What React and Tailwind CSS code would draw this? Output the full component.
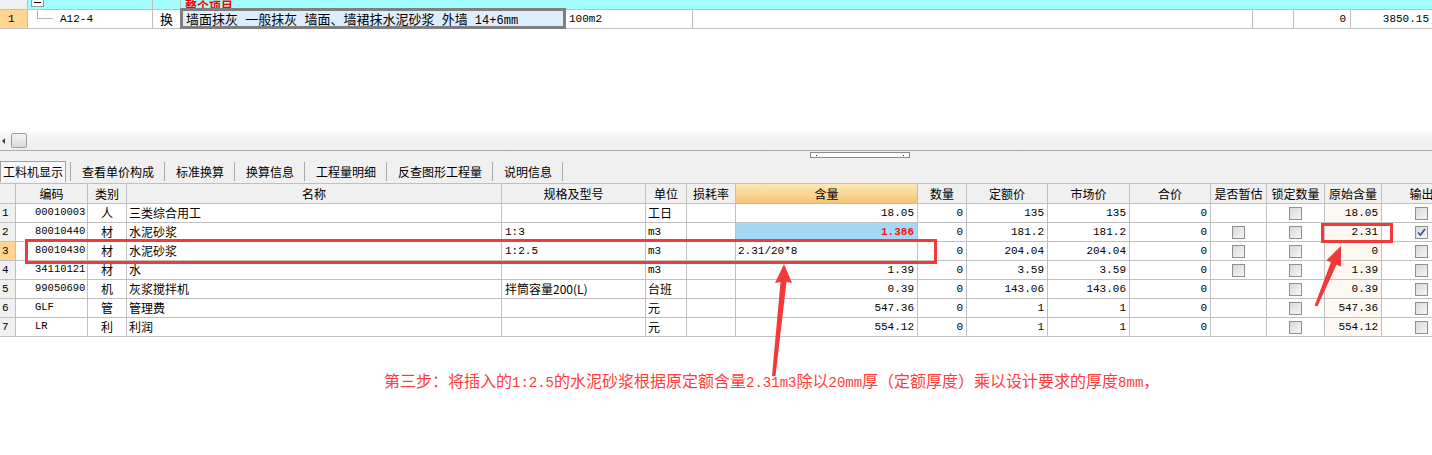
import React from "react";

const mono = "font-['Liberation_Mono','Noto_Sans_CJK_SC',monospace] text-[11px]";
const codeFont = "font-['Liberation_Mono',monospace] text-[10.5px]";
const cjk = "font-['Noto_Sans_CJK_SC',sans-serif] text-[12px]";
const latin = "font-['Liberation_Mono',monospace] text-[14px]";
const line = "border-[#c0c0c0]";

const Checkbox = ({ checked }) => (
  <span className="w-[13px] h-[13px] border border-[#8e8f8f] bg-gradient-to-br from-[#d8d8d8] to-[#f7f7f7] flex items-center justify-center">
    {checked && (
      <svg width="9" height="9" viewBox="0 0 9 9">
        <path d="M1 4.5 L3.5 7 L8 1" fill="none" stroke="#2b4aa8" strokeWidth="1.6" />
      </svg>
    )}
  </span>
);

const rows = [
  { no: "1", code: "00010003", type: "人", name: "三类综合用工", spec: "", unit: "工日", qty: "18.05", price: "135", market: "135", est: false, orig: "18.05", out: false },
  { no: "2", code: "80010440", type: "材", name: "水泥砂浆", spec: "1:3", unit: "m3", qty: "1.386", price: "181.2", market: "181.2", est: true, orig: "2.31", out: true, hot: true },
  { no: "3", code: "80010430", type: "材", name: "水泥砂浆", spec: "1:2.5", unit: "m3", qty: "2.31/20*8", price: "204.04", market: "204.04", est: true, orig: "0", out: false, current: true },
  { no: "4", code: "34110121", type: "材", name: "水", spec: "", unit: "m3", qty: "1.39", price: "3.59", market: "3.59", est: true, orig: "1.39", out: false },
  { no: "5", code: "99050690", type: "机", name: "灰浆搅拌机", spec: "拌筒容量200(L)", unit: "台班", qty: "0.39", price: "143.06", market: "143.06", est: false, orig: "0.39", out: false },
  { no: "6", code: "GLF", type: "管", name: "管理费", spec: "", unit: "元", qty: "547.36", price: "1", market: "1", est: false, orig: "547.36", out: false },
  { no: "7", code: "LR", type: "利", name: "利润", spec: "", unit: "元", qty: "554.12", price: "1", market: "1", est: false, orig: "554.12", out: false },
];

const tabs = ["查看单价构成", "标准换算", "换算信息", "工程量明细", "反查图形工程量", "说明信息"];

const Head = ({ className, children }) => (
  <div className={`shrink-0 h-full border-r ${line} flex items-center justify-center ${cjk} text-black ${className}`}>
    {children}
  </div>
);

const Td = ({ className, children }) => (
  <div className={`shrink-0 h-full border-r ${line} flex items-center overflow-hidden whitespace-nowrap ${className}`}>
    {children}
  </div>
);

export default function App() {
  return (
    <div className="relative w-[1432px] h-[455px] overflow-hidden bg-white text-black">
      {/* upper grid */}
      <div className="flex h-[10px] w-max border-b border-[#c0c0c0]">
        <div className={`shrink-0 w-[28px] h-full border-r ${line} bg-[#f0f0f0]`} />
        <div className={`shrink-0 w-[125px] h-full border-r ${line} bg-[#a3fdfd] pl-[3px]`}>
          <div className="w-[13px] h-[7px] border border-t-0 border-[#9a9a9a] bg-white flex items-start justify-center">
            <div className="w-[7px] h-px bg-black mt-[2px]" />
          </div>
        </div>
        <div className={`shrink-0 w-[28px] h-full border-r ${line} bg-[#a3fdfd]`} />
        <div className="shrink-0 w-[1251px] h-full bg-[#a3fdfd] overflow-hidden pl-[4px] flex items-end">
          <span className={`${cjk} font-bold text-[#ff0000] leading-[16px] -mb-[5px]`}>整个项目</span>
        </div>
      </div>
      <div className="flex h-[19px] w-max border-b border-[#c0c0c0]">
        <Td className="w-[28px] bg-[#ffd591] pl-[8px]">
          <span className={mono}>1</span>
        </Td>
        <Td className="w-[125px] relative">
          <div className="absolute left-[9px] top-0 w-px h-[9px] bg-[#b4b4b4]" />
          <div className="absolute left-[9px] top-[8px] w-[16px] h-px bg-[#b4b4b4]" />
          <span className={`${mono} pl-[32px]`}>A12-4</span>
        </Td>
        <Td className="w-[28px] justify-center">
          <span className="font-['Noto_Sans_CJK_SC',sans-serif] text-[13px]">换</span>
        </Td>
        <div className="shrink-0 w-[384px] h-full relative bg-[#deedfc] flex items-center">
          <div className="absolute -top-[2px] -left-px -right-px -bottom-px border-[3px] border-[#7f7f7f]" />
          <span className="font-['Noto_Sans_CJK_SC',sans-serif] text-[13px] pl-[5px] whitespace-pre">
            墙面抹灰<span className="font-['Liberation_Mono',monospace] text-[12px]"> </span>一般抹灰
            <span className="font-['Liberation_Mono',monospace] text-[12px]"> </span>墙面、墙裙抹水泥砂浆
            <span className="font-['Liberation_Mono',monospace] text-[12px]"> </span>外墙
            <span className="font-['Liberation_Mono',monospace] text-[12px]"> 14+6mm</span>
          </span>
        </div>
        <Td className="w-[128px] pl-[4px]">
          <span className={mono}>100m2</span>
        </Td>
        <Td className="w-[560px]" />
        <Td className="w-[41px]" />
        <Td className="w-[57px] justify-end pr-[4px]">
          <span className={mono}>0</span>
        </Td>
        <Td className="w-[81px] justify-end pr-[3px] border-r-0">
          <span className={mono}>3850.15</span>
        </Td>
      </div>
      <div className="h-[102px]" />

      {/* horizontal scrollbar */}
      <div className="h-[19px] bg-gradient-to-b from-[#fbfbfb] via-[#f0f0f0] to-[#efefef] flex items-center">
        <span className="ml-[2px] w-0 h-0 border-y-[3px] border-y-transparent border-r-[3px] border-r-[#404040]" />
        <div className="ml-[6px] w-[16px] h-[15px] border border-[#9e9e9e] rounded-[2px] bg-gradient-to-b from-[#f6f6f6] to-[#d9d9d9]" />
      </div>
      <div className="h-px bg-[#a9a9a9]" />

      {/* tab bar */}
      <div className="h-[32px] bg-[#f0f0f0]">
        <div className="h-[8px] pl-[810px] pt-px">
          <div className="w-[100px] h-[6px] border border-[#8a8a8a] bg-white flex items-center justify-between px-[5px]">
            <span className="w-px h-px bg-[#2020c0]" />
            <span className="w-px h-px bg-[#2020c0]" />
          </div>
        </div>
        <div className="flex items-end h-[23px]">
          <div className={`h-[21px] w-[66px] border border-b-0 border-[#a0a0a0] bg-[#f7f7f7] flex items-center justify-center ${cjk}`}>
            工料机显示
          </div>
          <div className="w-[4px]" />
          {tabs.map((t) => (
            <div key={t} className="h-[21px] flex items-center">
              <div className="w-px h-[19px] bg-[#a8a8a8]" />
              <span className={`${cjk} pl-[11px] pr-[10px]`}>{t}</span>
            </div>
          ))}
          <div className="h-[21px] flex items-center">
            <div className="w-px h-[19px] bg-[#a8a8a8]" />
          </div>
        </div>
      </div>

      {/* lower grid header */}
      <div className="flex h-[21px] w-max border-y border-[#c0c0c0] bg-[#f0f0f0]">
        <Head className="w-[16px]" />
        <Head className="w-[72px]">编码</Head>
        <Head className="w-[39px]">类别</Head>
        <Head className="w-[375px]">名称</Head>
        <Head className="w-[144px]">规格及型号</Head>
        <Head className="w-[41px]">单位</Head>
        <Head className="w-[49px]">损耗率</Head>
        <Head className="w-[182px] bg-gradient-to-b from-[#fde7b6] to-[#f6c574]">含量</Head>
        <Head className="w-[49px]">数量</Head>
        <Head className="w-[81px]">定额价</Head>
        <Head className="w-[82px]">市场价</Head>
        <Head className="w-[81px]">合价</Head>
        <Head className="w-[56px]">是否暂估</Head>
        <Head className="w-[58px]">锁定数量</Head>
        <Head className="w-[57px]">原始含量</Head>
        <Head className="w-[80px]">输出</Head>
      </div>

      {rows.map((r) => (
        <div key={r.no} className="flex h-[19px] w-max border-b border-[#c0c0c0]">
          <Td className={`w-[16px] pl-[2px] ${r.current ? "bg-[#ffd591]" : "bg-[#f0f0f0]"}`}>
            <span className={mono}>{r.no}</span>
          </Td>
          <Td className="w-[72px] pl-[19px]">
            <span className={codeFont}>{r.code}</span>
          </Td>
          <Td className="w-[39px] justify-center">
            <span className={cjk}>{r.type}</span>
          </Td>
          <Td className="w-[375px] pl-[2px]">
            <span className={cjk}>{r.name}</span>
          </Td>
          <Td className="w-[144px] pl-[3px]">
            <span className={r.spec.startsWith("1:") ? mono : cjk}>{r.spec}</span>
          </Td>
          <Td className="w-[41px] pl-[2px]">
            <span className={r.unit === "m3" ? mono : cjk}>{r.unit}</span>
          </Td>
          <Td className="w-[49px]" />
          <Td
            className={`w-[182px] ${r.current ? "justify-start pl-[2px]" : "justify-end pr-[3px]"} ${
              r.hot ? "bg-[#a4d9f6]" : ""
            }`}
          >
            <span className={`${mono} ${r.hot ? "font-bold text-[#ff1010]" : ""}`}>{r.qty}</span>
          </Td>
          <Td className="w-[49px] justify-end pr-[3px]">
            <span className={mono}>0</span>
          </Td>
          <Td className="w-[81px] justify-end pr-[3px]">
            <span className={mono}>{r.price}</span>
          </Td>
          <Td className="w-[82px] justify-end pr-[3px]">
            <span className={mono}>{r.market}</span>
          </Td>
          <Td className="w-[81px] justify-end pr-[3px]">
            <span className={mono}>0</span>
          </Td>
          <Td className="w-[56px] justify-center">{r.est && <Checkbox />}</Td>
          <Td className="w-[58px] justify-center">
            <Checkbox />
          </Td>
          <Td className="w-[57px] justify-end pr-[3px] bg-[#fdf8f2]">
            <span className={mono}>{r.orig}</span>
          </Td>
          <Td className="w-[80px] justify-center">
            <Checkbox checked={r.out} />
          </Td>
        </div>
      ))}

      {/* annotation text */}
      <div className="pt-[34px] pl-[384px] whitespace-nowrap font-['Noto_Sans_CJK_SC',sans-serif] text-[16px] leading-[18px] text-[#ff3c3c]">
        第三步：将插入的<span className={latin}>1:2.5</span>的水泥砂浆根据原定额含量
        <span className={latin}>2.31m3</span>除以
        <span className={latin}>20mm</span>厚（定额厚度）乘以设计要求的厚度
        <span className={latin}>8mm</span>，
      </div>

      {/* annotation marks */}
      <svg className="absolute left-0 top-0 pointer-events-none" width="1432" height="455">
        <rect x="26.5" y="240.5" width="909" height="22" fill="none" stroke="#f23a3a" strokeWidth="3" />
        <rect x="1322.5" y="224.5" width="69" height="17" fill="none" stroke="#f23a3a" strokeWidth="3" />
        <polygon points="784,264 792,283 786.5,282 775.5,376 772,376 780.5,282 775,283" fill="#f23a3a" />
        <polygon points="1341,246 1341.1,266.6 1336.5,264.7 1317.4,306.6 1314.6,305.4 1330.9,262.3 1326.3,260.4" fill="#f23a3a" />
      </svg>
    </div>
  );
}
